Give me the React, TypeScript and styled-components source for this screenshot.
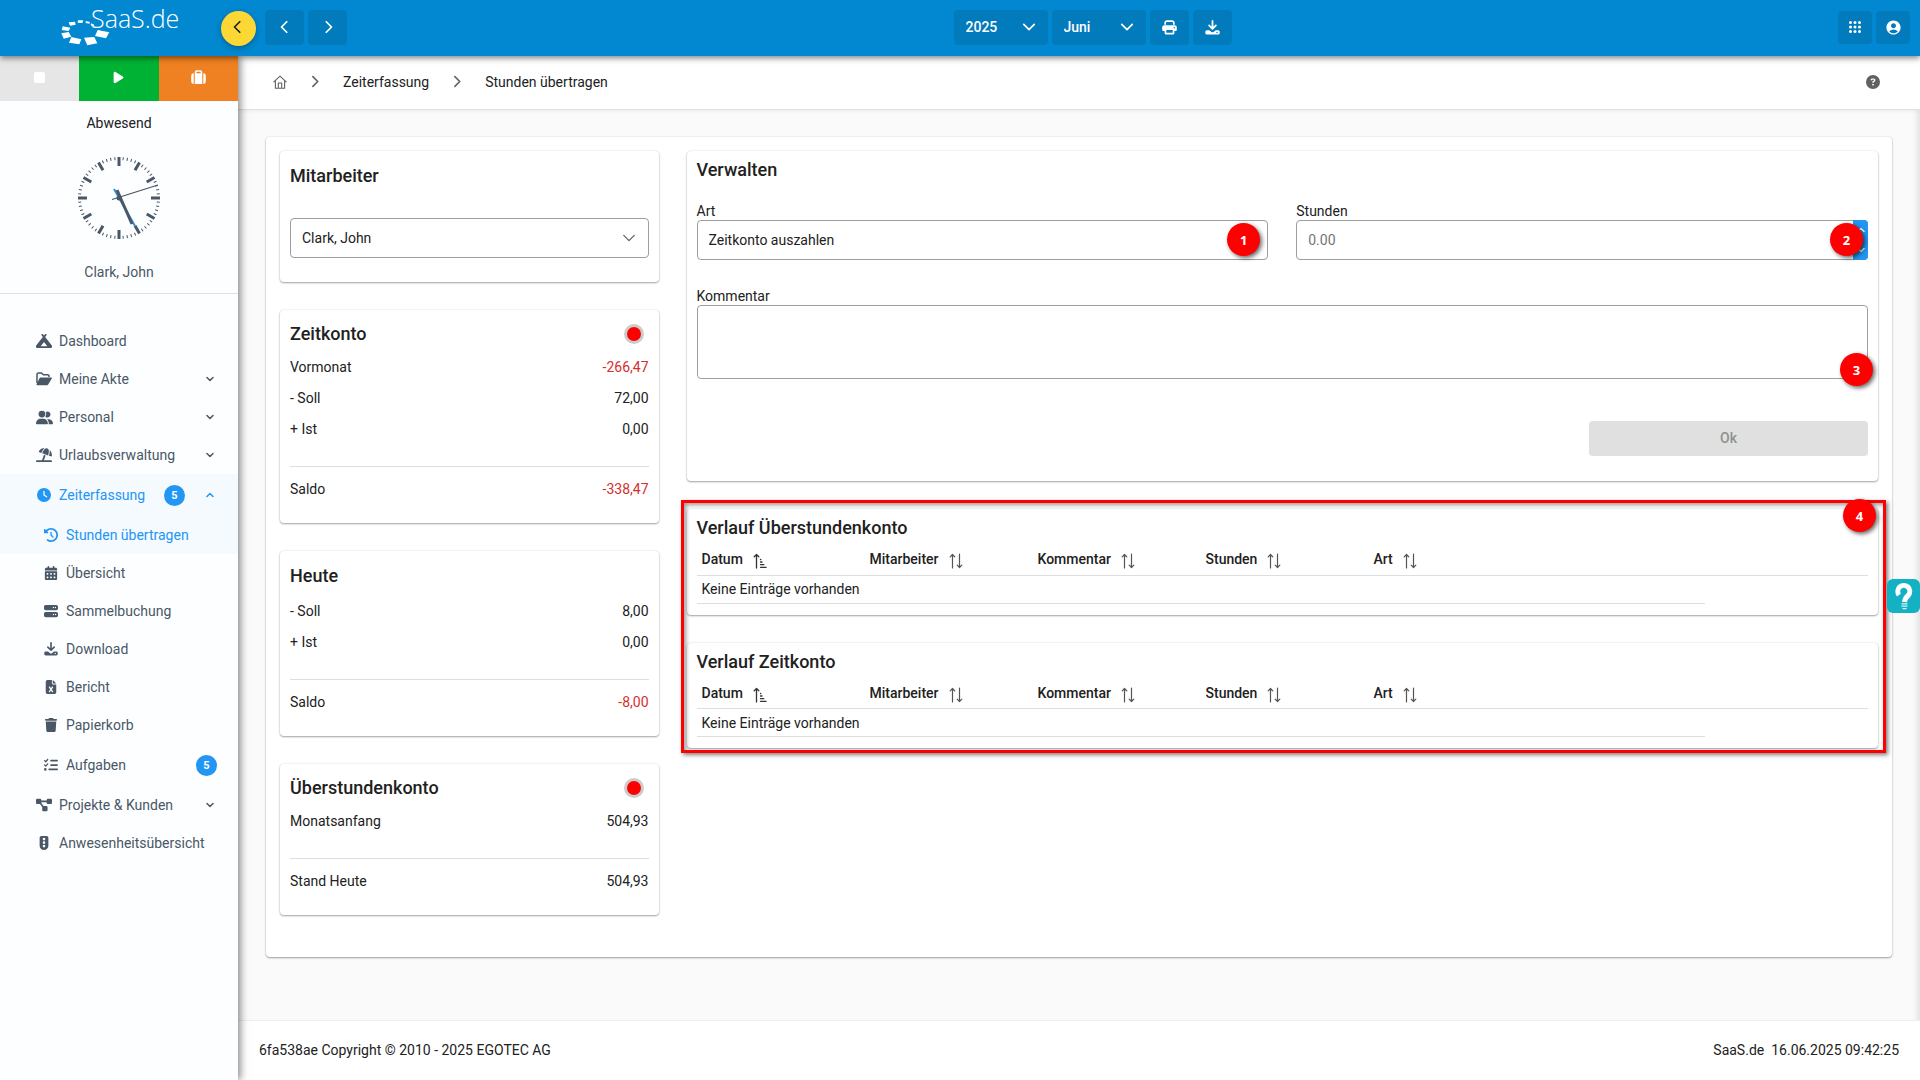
import React from "react";
import styled, { createGlobalStyle, css } from "styled-components";
import {
  FaCampground, FaUserGroup, FaUmbrellaBeach, FaClock, FaClockRotateLeft,
  FaCalendarDays, FaServer, FaFileExcel, FaTrash, FaListCheck, FaDiagramProject,
  FaTrafficLight, FaCircleQuestion, FaPlay,
} from "react-icons/fa6";
import { MdAccountCircle } from "react-icons/md";

const GlobalStyle = createGlobalStyle`
  * { box-sizing: border-box; }
  body { margin: 0; background: #fafafa; }
  body, button, input, select, textarea {
    font-family: Roboto, "Liberation Sans", sans-serif;
    font-size: 14px;
    color: #212121;
  }
  button { cursor: pointer; }
  a { color: inherit; text-decoration: none; }
  h2, p, dl, dt, dd, ul { margin: 0; padding: 0; }
  ul { list-style: none; }
`;

/* ---------- drawings ---------- */

type ChevronDir = "left" | "right" | "up" | "down";
const chevronPaths: Record<ChevronDir, string> = {
  left: "M10 2 4 8l6 6",
  right: "M6 2l6 6-6 6",
  up: "M2 11l6-6 6 6",
  down: "M2 5l6 6 6-6",
};

const Chevron = ({ dir, size = 14, weight = 2 }: { dir: ChevronDir; size?: number; weight?: number }) => (
  <svg width={size} height={size} viewBox="0 0 16 16" fill="none" stroke="currentColor"
    strokeWidth={weight} strokeLinecap="round" strokeLinejoin="round" aria-hidden="true">
    <path d={chevronPaths[dir]} />
  </svg>
);

const DownloadIcon = ({ size = 14 }: { size?: number }) => (
  <svg width={size} height={size} viewBox="0 0 16 16" fill="none" aria-hidden="true">
    <path d="M8 1v8M4.4 5.8 8 9.4l3.6-3.6" stroke="currentColor" strokeWidth="1.9" strokeLinecap="round" strokeLinejoin="round" />
    <path fill="currentColor" fillRule="evenodd" d="M2 10.8h2.6l2 1.7a2.2 2.2 0 0 0 2.8 0l2-1.7H14a1.7 1.7 0 0 1 1.7 1.7v1.3a1.7 1.7 0 0 1-1.7 1.7H2a1.7 1.7 0 0 1-1.7-1.7v-1.3A1.7 1.7 0 0 1 2 10.8zm10.8 1.6a.8.8 0 1 0 0 1.6.8.8 0 0 0 0-1.6z" />
  </svg>
);

const FolderIcon = () => (
  <svg width="16" height="14" viewBox="0 0 16 14" aria-hidden="true">
    <path d="M1 11V2.500A1.500 1.500 0 0 1 2.500 1h3L7.300 2.700h4.200A1.500 1.500 0 0 1 13 4.200V5" fill="none" stroke="currentColor" strokeWidth="1.500" />
    <path d="M4.600 5.500h10.600a.7.700 0 0 1 .6 1.100l-3.600 5.800a1.500 1.500 0 0 1-1.300.8H1.200a.7.700 0 0 1-.6-1.100l2.900-5.900a1.300 1.300 0 0 1 1.100-.7z" fill="currentColor" />
  </svg>
);

const PrintIcon = () => (
  <svg width="15" height="15" viewBox="0 0 16 16" fill="none" aria-hidden="true">
    <path d="M3.4 5V3a1.8 1.8 0 0 1 1.8-1.8h5.6A1.8 1.8 0 0 1 12.6 3v2" stroke="currentColor" strokeWidth="1.8" />
    <path fill="currentColor" fillRule="evenodd" d="M2.4 5.6h11.2A2.2 2.2 0 0 1 15.8 7.800v2.700a1.300 1.300 0 0 1-1.300 1.300H13.200V14a1.500 1.500 0 0 1-1.500 1.500H4.300A1.500 1.500 0 0 1 2.800 14v-2.200H1.500A1.300 1.300 0 0 1 .2 10.500V7.800a2.200 2.200 0 0 1 2.200-2.200zM4.600 10.600v3.100h6.800v-3.100zM13 7.400a.8.8 0 1 0 0 1.600.8.800 0 0 0 0-1.600z" />
  </svg>
);

const LuggageIcon = () => (
  <svg width="15" height="15" viewBox="0 0 16 16" fill="#fff" aria-hidden="true">
    <path d="M4 3.400V2A1.800 1.800 0 0 1 5.800.2h4.400A1.800 1.800 0 0 1 12 2v13H4zM5.700 3.400h4.600V2.300a.5.500 0 0 0-.5-.5H6.200a.5.500 0 0 0-.5.500z" fillRule="evenodd" />
    <path d="M2.900 3.500v11.300A2.600 2.600 0 0 1 .2 12.200V6a2.600 2.600 0 0 1 2.700-2.500zM13.100 3.500v11.300a2.600 2.600 0 0 0 2.700-2.600V6a2.600 2.600 0 0 0-2.700-2.500z" />
  </svg>
);

const GridIcon = () => (
  <svg width="12" height="12" viewBox="0 0 12 12" fill="#fff" aria-hidden="true">
    {[1.500, 6, 10.500].map((y) => [1.500, 6, 10.500].map((x) => <circle key={`${x}-${y}`} cx={x} cy={y} r="1.500" />))}
  </svg>
);

const HomeIcon = () => (
  <svg width="14" height="14" viewBox="0 0 14 14" fill="none" stroke="#616161" strokeWidth="1.100"
    strokeLinecap="round" strokeLinejoin="round" aria-hidden="true">
    <path d="M.8 6.800 7 1.200l6.200 5.600M2.400 5.600v7.600h9.200V5.600M5.300 13V8h3.400v5" />
  </svg>
);

const SortIcon = () => (
  <svg width="14" height="16" viewBox="0 0 14 16" fill="none" stroke="#555"
    strokeWidth="1.200" strokeLinecap="round" strokeLinejoin="round" aria-hidden="true">
    <path d="M3.500 15V1.500M1.200 3.800l2.300-2.300 2.300 2.300M10.500 1v13.500M8.200 12.200l2.300 2.300 2.300-2.300" />
  </svg>
);

const SortAscIcon = () => (
  <svg width="14" height="16" viewBox="0 0 14 16" fill="none" stroke="#333"
    strokeWidth="1.300" strokeLinecap="round" strokeLinejoin="round" aria-hidden="true">
    <path d="M3.500 15V1.500M1.200 3.800l2.300-2.300 2.300 2.300" />
    <path d="M7.500 6.500h.3M7.500 9h1.500M7.500 11.700h3.300M7.500 14.300h5.600" />
  </svg>
);

const LogoMark = () => (
  <svg width="50" height="28" viewBox="0 0 50 28" fill="#fff" aria-hidden="true">
    <path d="M36.700 12l11.600 2.300-3.300 6L34 18zM23 19.700l10.300-.7 3 6.300-10 2zM10.300 19l10 2.300-2 5-10.300-1.600zM.3 15.300 7.700 14l2.600 4.700-7.600 2zM1.700 8.300l7.600 1.400L7.700 13l-7-1zM7.700 4.300l6.300-.6.7 3-5.700 1zM17 2.300h5.300l-1 2.700-4.600-.3zM24.700 3l4.300 1-.7 1.700-3.600-.7zM30 5.300l3.300 1.400-1 2-2.600-1.400z" />
  </svg>
);

const BulbIcon = () => (
  <svg width="18" height="28" viewBox="0 0 18 28" fill="none" aria-hidden="true">
    <path d="M4 13A6 6 0 1 1 13.600 13C11 15.200 9.800 17 9.500 20" stroke="#fff" strokeWidth="5" />
    <path d="M6.500 21.800h6M6.500 24.200h6M7.500 26.600h4" stroke="#d9f4f7" strokeWidth="1.200" />
  </svg>
);

const Clock = () => (
  <svg width="84" height="84" viewBox="-42 -42 84 84" role="img" aria-label="Uhr">
    {Array.from({ length: 60 }, (_, i) => {
      const hour = i % 5 === 0;
      return (
        <line key={i} x1="0" x2="0" y1="-41" y2={hour ? -32 : -38} stroke="#495766"
          strokeWidth={hour ? 3 : 1} transform={`rotate(${i * 6})`} />
      );
    })}
    <line x1="-5" y1="-9" x2="16" y2="28" stroke="#2f8fe0" strokeWidth="2" />
    <line x1="-2" y1="-8" x2="13" y2="26" stroke="#495766" strokeWidth="3" />
    <line x1="-7" y1="1.500" x2="39" y2="-13" stroke="#495766" strokeWidth="1.300" />
    <circle r="2.500" fill="#495766" />
  </svg>
);

/* ---------- header ---------- */

const Header = styled.header`
  position: sticky;
  top: 0;
  z-index: 5;
  display: flex;
  align-items: center;
  height: 56px;
  background: #0288d1;
  box-shadow: 0 2px 6px rgba(0, 0, 0, 0.5);
`;

const Brand = styled.a`
  display: flex;
  align-items: flex-start;
  width: 221px;
  height: 56px;
  padding: 6px 0 0 61px;
  color: #fff;
  svg { margin: 12px -20px 0 0; }
`;

const BrandName = styled.span`
  font-family: "Open Sans", sans-serif;
  font-weight: 300;
  font-size: 25px;
  line-height: 24px;
`;

const CollapseButton = styled.button`
  display: grid;
  place-items: center;
  width: 35px;
  height: 35px;
  padding: 0 2px 2px 0;
  border: 0;
  border-radius: 50%;
  background: #fdd835;
  box-shadow: 0 2px 6px rgba(0, 0, 0, 0.3);
`;

const HeaderTools = styled.div`
  flex: 1;
  display: grid;
  grid-template-columns: 1fr auto 1fr;
  margin-left: 9px;
  padding-bottom: 2px;
`;

const ToolGroup = styled.div<{ $end?: boolean }>`
  display: flex;
  align-items: center;
  gap: 4px;
  ${(p) => p.$end && css`
    justify-content: flex-end;
    padding-right: 10px;
  `}
`;

const HeaderButton = styled.button<{ $small?: boolean }>`
  display: grid;
  place-items: center;
  width: ${(p) => (p.$small ? 34 : 39)}px;
  height: ${(p) => (p.$small ? 33 : 35)}px;
  padding: 0;
  border: 0;
  border-radius: 4px;
  background: #027bbd;
  color: #fff;
`;

const SelectWrap = styled.span<{ $header?: boolean }>`
  position: relative;
  display: block;
  width: ${(p) => (p.$header ? "94px" : "100%")};
  color: ${(p) => (p.$header ? "#fff" : "#616161")};
  > svg {
    position: absolute;
    top: 50%;
    right: ${(p) => (p.$header ? 12 : 13)}px;
    margin-top: -7px;
    pointer-events: none;
  }
`;

const HeaderSelect = styled.select`
  appearance: none;
  width: 100%;
  height: 35px;
  padding: 0 12px;
  border: 0;
  border-radius: 4px;
  background: #027bbd;
  color: #fff;
  font-weight: 500;
`;

/* ---------- sidebar ---------- */

const Shell = styled.div`
  display: flex;
  min-height: calc(100vh - 56px);
`;

const Sidebar = styled.aside`
  position: relative;
  z-index: 2;
  flex: none;
  width: 238px;
  background: #fdfeff;
  box-shadow: 2px 0 8px rgba(0, 0, 0, 0.5);
  color: #495766;
`;

const Punch = styled.div`
  display: grid;
  grid-template-columns: repeat(3, 1fr);
`;

const PunchButton = styled.button<{ $color: string }>`
  display: grid;
  place-items: center;
  height: 45px;
  padding: 0 0 2px;
  border: 0;
  background: ${(p) => p.$color};
  color: #fff;
`;

const StopMark = styled.span`
  width: 11px;
  height: 11px;
  border-radius: 2px;
  background: #fff;
`;

const Presence = styled.div`
  display: flex;
  flex-direction: column;
  align-items: center;
  padding: 12px 0 11px;
  border-bottom: 1px solid #dfe3e7;
  line-height: 20px;
  > svg { margin: 23px 0 22px; }
`;

const Status = styled.strong`
  font-weight: 400;
  color: #212121;
`;

const NavList = styled.ul`
  && { padding-top: 28px; }
`;

const NavLink = styled.a<{ $sub?: boolean; $active?: boolean; $tall?: boolean }>`
  display: flex;
  align-items: center;
  height: ${(p) => (p.$tall ? 42 : 38)}px;
  padding: 0 ${(p) => (p.$sub ? 21 : 20)}px 0 ${(p) => (p.$sub ? 42 : 35)}px;
  background: ${(p) => (p.$active ? "#f5faff" : "transparent")};
  color: ${(p) => (p.$active ? "#2196f3" : "inherit")};
`;

const NavIcon = styled.span`
  display: grid;
  place-items: center;
  width: 18px;
  margin-right: 6px;
`;

const NavText = styled.span`
  flex: 1;
  white-space: nowrap;
`;

const NavArrow = styled.span`
  display: grid;
  place-items: center;
  width: 16px;
`;

const Count = styled.span<{ $gap?: boolean }>`
  display: grid;
  place-items: center;
  width: 21px;
  height: 21px;
  margin-right: ${(p) => (p.$gap ? 17 : 0)}px;
  border-radius: 50%;
  background: #2196f3;
  color: #fff;
  font-size: 11px;
  font-weight: 700;
`;

/* ---------- main ---------- */

const Main = styled.div`
  flex: 1;
  min-width: 0;
  display: flex;
  flex-direction: column;
  box-shadow: inset -4px 0 6px -2px rgba(0, 0, 0, 0.12);
`;

const Crumbs = styled.nav`
  display: flex;
  align-items: center;
  height: 54px;
  padding: 0 40px 2px 35px;
  border-bottom: 1px solid #e0e0e0;
  background: #fff;
  box-shadow: 0 1px 4px rgba(0, 0, 0, 0.06);
`;

const Crumb = styled.a`
  display: flex;
`;

const CrumbArrow = styled.span`
  display: grid;
  place-items: center;
  width: 56px;
  padding-right: 2px;
  color: #616161;
`;

const HelpButton = styled.button`
  display: grid;
  margin-left: auto;
  padding: 0;
  border: 0;
  background: none;
  color: #616161;
`;

const cardLook = css`
  border-radius: 4px;
  background: #fff;
  box-shadow: 0 1px 2px rgba(0, 0, 0, 0.35), 0 0 2px rgba(0, 0, 0, 0.12);
`;

const Page = styled.main`
  ${cardLook}
  display: flex;
  align-items: flex-start;
  margin: 27px 28px 63px;
  padding: 14px 0 42px;
`;

const Column = styled.div<{ $share: number }>`
  display: flex;
  flex-direction: column;
  gap: 28px;
  width: ${(p) => p.$share}%;
  padding: 0 14px;
`;

const Card = styled.section<{ $bottom: number }>`
  ${cardLook}
  padding: 0 10px ${(p) => p.$bottom}px;
`;

const CardHead = styled.div<{ $compact?: boolean }>`
  display: flex;
  align-items: center;
  justify-content: space-between;
  padding: ${(p) => (p.$compact ? "12px 5px 6px 0" : "13px 0 8px")};
`;

const Title = styled.h2`
  font-size: 18px;
  line-height: 24px;
  font-weight: 500;
`;

const Lamp = styled.span`
  width: 20px;
  height: 20px;
  border: 3px solid #ccc;
  border-radius: 50%;
  background: #f00;
`;

const Balance = styled.dl`
  display: flex;
  flex-direction: column;
`;

const BalanceRow = styled.div<{ $total?: boolean }>`
  display: flex;
  justify-content: space-between;
  line-height: 31px;
  ${(p) => p.$total && css`
    margin-top: 21px;
    padding-top: 7px;
    border-top: 1px solid #dedede;
  `}
`;

const Amount = styled.dd<{ $negative?: boolean }>`
  color: ${(p) => (p.$negative ? "#d32f2f" : "inherit")};
`;

const field = css`
  display: block;
  width: 100%;
  height: 40px;
  padding: 0 11px;
  border: 1px solid #9e9e9e;
  border-radius: 4px;
  background: #fff;
`;

const Select = styled.select`
  ${field}
  appearance: none;
`;
const NumberInput = styled.input`
  ${field}
  &::placeholder { color: #757575; }
`;
const TextArea = styled.textarea`
  ${field}
  height: 74px;
  resize: none;
`;

const EmployeeField = styled.div`
  padding-top: 22px;
`;

const Form = styled.form`
  display: grid;
  grid-template-columns: 1fr 1fr;
  gap: 26px 28px;
`;

const FieldBox = styled.div<{ $wide?: boolean }>`
  grid-column: ${(p) => (p.$wide ? "1 / -1" : "auto")};
`;

const Label = styled.label`
  display: block;
  padding-top: 2px;
  line-height: 17px;
`;

const Control = styled.div`
  position: relative;
`;

const Spinner = styled.div`
  position: absolute;
  top: 0;
  right: 0;
  display: flex;
  flex-direction: column;
  width: 15px;
  height: 40px;
  overflow: hidden;
  border-radius: 0 4px 4px 0;
`;

const SpinButton = styled.button`
  flex: 1;
  display: grid;
  place-items: center;
  padding: 0;
  border: 0;
  background: #2196f3;
  color: #fff;
`;

const SubmitButton = styled.button`
  grid-column: 1 / -1;
  justify-self: end;
  width: calc(25% - 14px);
  height: 35px;
  margin-top: 16px;
  padding: 0 0 2px;
  border: 0;
  border-radius: 4px;
  background: #e0e0e0;
  color: #909090;
  font-weight: 500;
`;

const Marker = styled.span<{ $top: number; $right: number }>`
  position: absolute;
  z-index: 3;
  top: ${(p) => p.$top}px;
  right: ${(p) => p.$right}px;
  display: grid;
  place-items: center;
  width: 33px;
  height: 33px;
  border-radius: 50%;
  background: #f00;
  box-shadow: 2px 2px 4px rgba(0, 0, 0, 0.6);
  color: #fff;
  font-family: "Open Sans", sans-serif;
  font-size: 13px;
  font-weight: 700;
`;

const History = styled.div`
  position: relative;
  display: flex;
  flex-direction: column;
  gap: 28px;
`;

const Frame = styled.div`
  position: absolute;
  inset: -9px -8px -5px -6px;
  border: 3px solid #f00;
  box-shadow: 2px 2px 4px rgba(0, 0, 0, 0.5), inset 2px 2px 4px rgba(0, 0, 0, 0.4);
  pointer-events: none;
`;

const FormHead = styled.div<{ $bottom: number }>`
  padding: 7px 0 ${(p) => p.$bottom}px;
`;

const Table = styled.table`
  width: 100%;
  table-layout: fixed;
  border-collapse: collapse;
`;

const HeadCell = styled.th<{ $rest?: boolean }>`
  width: ${(p) => (p.$rest ? "auto" : "168px")};
  height: 31px;
  padding: 0 5px;
  border-bottom: 1px solid #dedede;
  text-align: left;
  font-weight: 500;
`;

const SortButton = styled.button`
  display: flex;
  align-items: center;
  gap: 10px;
  padding: 0;
  border: 0;
  background: none;
  font-weight: 500;
  svg { margin-top: 4px; }
`;

const EmptyCell = styled.td`
  height: 28px;
  padding: 0 5px;
  border-bottom: 1px solid #dedede;
`;

const Footer = styled.footer`
  display: flex;
  justify-content: space-between;
  margin-top: auto;
  padding: 19px 21px 20px;
  border-top: 1px solid #eee;
  background: #fff;
  line-height: 20px;
`;

const Stamp = styled.span`
  display: flex;
  gap: 7px;
`;

const HelpTab = styled.button`
  position: fixed;
  z-index: 6;
  top: 579px;
  right: 0;
  display: grid;
  place-items: center;
  width: 33px;
  height: 34px;
  padding: 0;
  border: 0;
  border-radius: 6px;
  background: #12b2c4;
`;

/* ---------- data ---------- */

type NavEntry = {
  text: string; icon: React.ReactNode; sub?: boolean; active?: boolean;
  count?: number; arrow?: ChevronDir;
};

const nav: NavEntry[] = [
  { text: "Dashboard", icon: <FaCampground size={16} /> },
  { text: "Meine Akte", icon: <FolderIcon />, arrow: "down" },
  { text: "Personal", icon: <FaUserGroup size={17} />, arrow: "down" },
  { text: "Urlaubsverwaltung", icon: <FaUmbrellaBeach size={16} />, arrow: "down" },
  { text: "Zeiterfassung", icon: <FaClock size={14} />, active: true, count: 5, arrow: "up" },
  { text: "Stunden übertragen", icon: <FaClockRotateLeft size={14} />, sub: true, active: true },
  { text: "Übersicht", icon: <FaCalendarDays size={14} />, sub: true },
  { text: "Sammelbuchung", icon: <FaServer size={14} />, sub: true },
  { text: "Download", icon: <DownloadIcon />, sub: true },
  { text: "Bericht", icon: <FaFileExcel size={14} />, sub: true },
  { text: "Papierkorb", icon: <FaTrash size={14} />, sub: true },
  { text: "Aufgaben", icon: <FaListCheck size={14} />, sub: true, count: 5 },
  { text: "Projekte & Kunden", icon: <FaDiagramProject size={16} />, arrow: "down" },
  { text: "Anwesenheitsübersicht", icon: <FaTrafficLight size={14} /> },
];

type Line = { name: string; value: string; total?: boolean };
const balances: { title: string; lamp?: boolean; lines: Line[] }[] = [
  {
    title: "Zeitkonto", lamp: true, lines: [
      { name: "Vormonat", value: "-266,47" },
      { name: "- Soll", value: "72,00" },
      { name: "+ Ist", value: "0,00" },
      { name: "Saldo", value: "-338,47", total: true },
    ],
  },
  {
    title: "Heute", lines: [
      { name: "- Soll", value: "8,00" },
      { name: "+ Ist", value: "0,00" },
      { name: "Saldo", value: "-8,00", total: true },
    ],
  },
  {
    title: "Überstundenkonto", lamp: true, lines: [
      { name: "Monatsanfang", value: "504,93" },
      { name: "Stand Heute", value: "504,93", total: true },
    ],
  },
];

const columns = ["Datum", "Mitarbeiter", "Kommentar", "Stunden", "Art"];

const HistoryCard = ({ title }: { title: string }) => (
  <Card $bottom={11}>
    <FormHead $bottom={4}><Title>{title}</Title></FormHead>
    <Table>
      <thead>
        <tr>
          {columns.map((name, i) => (
            <HeadCell key={name} scope="col">
              <SortButton type="button">{name}{i === 0 ? <SortAscIcon /> : <SortIcon />}</SortButton>
            </HeadCell>
          ))}
          <HeadCell />
          <HeadCell $rest />
        </tr>
      </thead>
      <tbody>
        <tr><EmptyCell colSpan={6}>Keine Einträge vorhanden</EmptyCell></tr>
      </tbody>
    </Table>
  </Card>
);

export default function App() {
  return (
    <>
      <GlobalStyle />
      <Header>
        <Brand href="#" aria-label="SaaS.de">
          <LogoMark />
          <BrandName>SaaS.de</BrandName>
        </Brand>
        <CollapseButton aria-label="Menü einklappen"><Chevron dir="left" /></CollapseButton>
        <HeaderTools>
          <ToolGroup>
            <HeaderButton aria-label="Zurück"><Chevron dir="left" /></HeaderButton>
            <HeaderButton aria-label="Weiter"><Chevron dir="right" /></HeaderButton>
          </ToolGroup>
          <ToolGroup>
            <SelectWrap $header>
              <HeaderSelect aria-label="Jahr"><option>2025</option></HeaderSelect>
              <Chevron dir="down" />
            </SelectWrap>
            <SelectWrap $header>
              <HeaderSelect aria-label="Monat"><option>Juni</option></HeaderSelect>
              <Chevron dir="down" />
            </SelectWrap>
            <HeaderButton aria-label="Drucken"><PrintIcon /></HeaderButton>
            <HeaderButton aria-label="Herunterladen"><DownloadIcon size={15} /></HeaderButton>
          </ToolGroup>
          <ToolGroup $end>
            <HeaderButton $small aria-label="Apps"><GridIcon /></HeaderButton>
            <HeaderButton $small aria-label="Konto"><MdAccountCircle size={17} /></HeaderButton>
          </ToolGroup>
        </HeaderTools>
      </Header>
      <Shell>
        <Sidebar>
          <Punch>
            <PunchButton $color="#e6e6e6" aria-label="Stopp"><StopMark /></PunchButton>
            <PunchButton $color="#00b233" aria-label="Start"><FaPlay size={13} /></PunchButton>
            <PunchButton $color="#ef8122" aria-label="Dienstreise"><LuggageIcon /></PunchButton>
          </Punch>
          <Presence>
            <Status>Abwesend</Status>
            <Clock />
            <span>Clark, John</span>
          </Presence>
          <NavList>
            {nav.map((n) => (
              <li key={n.text}>
                <NavLink href="#" $sub={n.sub} $active={n.active} $tall={!!n.count}>
                  <NavIcon>{n.icon}</NavIcon>
                  <NavText>{n.text}</NavText>
                  {n.count && <Count $gap={!!n.arrow}>{n.count}</Count>}
                  {n.arrow && <NavArrow><Chevron dir={n.arrow} size={8} weight={3} /></NavArrow>}
                </NavLink>
              </li>
            ))}
          </NavList>
        </Sidebar>
        <Main>
          <Crumbs>
            <Crumb href="#" aria-label="Start"><HomeIcon /></Crumb>
            <CrumbArrow><Chevron dir="right" size={13} /></CrumbArrow>
            <Crumb href="#">Zeiterfassung</Crumb>
            <CrumbArrow><Chevron dir="right" size={13} /></CrumbArrow>
            <Crumb href="#">Stunden übertragen</Crumb>
            <HelpButton aria-label="Hilfe"><FaCircleQuestion size={14} /></HelpButton>
          </Crumbs>
          <Page>
            <Column $share={25}>
              <Card $bottom={24}>
                <CardHead><Title>Mitarbeiter</Title></CardHead>
                <EmployeeField>
                  <SelectWrap>
                    <Select aria-label="Mitarbeiter"><option>Clark, John</option></Select>
                    <Chevron dir="down" weight={1.500} />
                  </SelectWrap>
                </EmployeeField>
              </Card>
              {balances.map((b) => (
                <Card key={b.title} $bottom={18}>
                  <CardHead $compact={b.lamp}>
                    <Title>{b.title}</Title>
                    {b.lamp && <Lamp />}
                  </CardHead>
                  <Balance>
                    {b.lines.map((l) => (
                      <BalanceRow key={l.name} $total={l.total}>
                        <dt>{l.name}</dt>
                        <Amount $negative={l.value.startsWith("-")}>{l.value}</Amount>
                      </BalanceRow>
                    ))}
                  </Balance>
                </Card>
              ))}
            </Column>
            <Column $share={75}>
              <Card $bottom={25}>
                <FormHead $bottom={19}><Title>Verwalten</Title></FormHead>
                <Form>
                  <FieldBox>
                    <Label htmlFor="art">Art</Label>
                    <Control>
                      <Select id="art"><option>Zeitkonto auszahlen</option></Select>
                      <Marker $top={3} $right={8}>1</Marker>
                    </Control>
                  </FieldBox>
                  <FieldBox>
                    <Label htmlFor="stunden">Stunden</Label>
                    <Control>
                      <NumberInput id="stunden" placeholder="0.00" />
                      <Spinner>
                        <SpinButton type="button" aria-label="Mehr"><Chevron dir="up" size={8} weight={3} /></SpinButton>
                        <SpinButton type="button" aria-label="Weniger"><Chevron dir="down" size={8} weight={3} /></SpinButton>
                      </Spinner>
                      <Marker $top={3} $right={5}>2</Marker>
                    </Control>
                  </FieldBox>
                  <FieldBox $wide>
                    <Label htmlFor="kommentar">Kommentar</Label>
                    <Control>
                      <TextArea id="kommentar" />
                      <Marker $top={48} $right={-5}>3</Marker>
                    </Control>
                  </FieldBox>
                  <SubmitButton type="button" disabled>Ok</SubmitButton>
                </Form>
              </Card>
              <History>
                <HistoryCard title="Verlauf Überstundenkonto" />
                <HistoryCard title="Verlauf Zeitkonto" />
                <Frame />
                <Marker $top={-10} $right={2}>4</Marker>
              </History>
            </Column>
          </Page>
          <Footer>
            <span>6fa538ae Copyright © 2010 - 2025 EGOTEC AG</span>
            <Stamp><span>SaaS.de</span><span>16.06.2025 09:42:25</span></Stamp>
          </Footer>
        </Main>
      </Shell>
      <HelpTab aria-label="Hilfe öffnen"><BulbIcon /></HelpTab>
    </>
  );
}
